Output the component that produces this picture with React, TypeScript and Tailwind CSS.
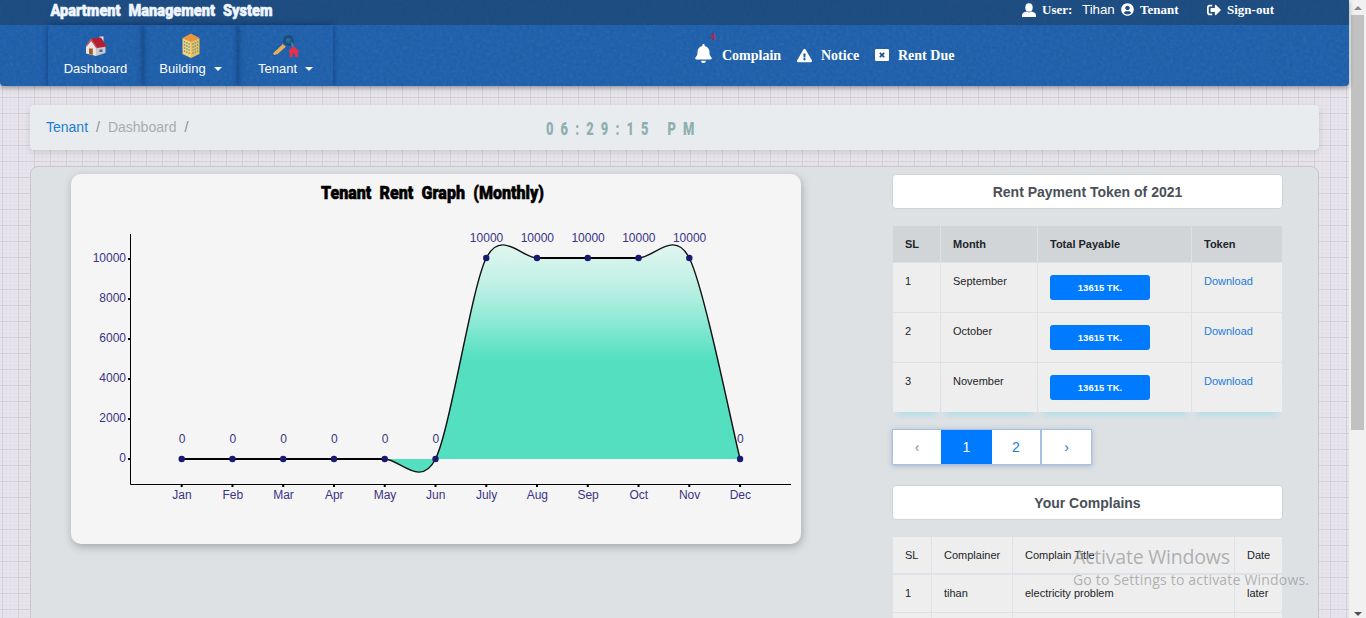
import React from "react";
import { FaBell, FaUserCircle, FaSignOutAlt, FaExclamationTriangle } from "react-icons/fa";

const INK = "#3a3484";
const STEP = 50.76;
const months = ["Jan", "Feb", "Mar", "Apr", "May", "Jun", "July", "Aug", "Sep", "Oct", "Nov", "Dec"];
const rents = [0, 0, 0, 0, 0, 0, 10000, 10000, 10000, 10000, 10000, 0];
const pts = rents.map((v, i) => ({ x: 110.7 + i * STEP, y: 285 - (v / 10000) * 201, v }));

function spline() {
  const t = 0.147;
  let d = `M${pts[0].x} ${pts[0].y}`;
  for (let i = 0; i < pts.length - 1; i++) {
    const a = pts[Math.max(i - 1, 0)];
    const b = pts[i];
    const c = pts[i + 1];
    const e = pts[Math.min(i + 2, pts.length - 1)];
    d += ` C${b.x + (c.x - a.x) * t} ${b.y + (c.y - a.y) * t} ${c.x - (e.x - b.x) * t} ${c.y - (e.y - b.y) * t} ${c.x} ${c.y}`;
  }
  return d;
}

function Chart() {
  const line = spline();
  return (
    <svg width="730" height="370" viewBox="0 0 730 370" className="block" fontFamily="'Liberation Sans', Arial, sans-serif" fontSize="12" fill={INK}>
      <defs>
        <linearGradient id="rent" x1="0" y1="71" x2="0" y2="185" gradientUnits="userSpaceOnUse">
          <stop offset="0" stopColor="#e0f6f0" />
          <stop offset="0.35" stopColor="#bff0e4" />
          <stop offset="0.6" stopColor="#98ebd9" />
          <stop offset="1" stopColor="#54e0c0" />
        </linearGradient>
      </defs>
      <text x="250" y="24.500" textLength="223" lengthAdjust="spacingAndGlyphs" fontFamily="Roboto, sans-serif" fontWeight="900" fontSize="19" fill="#000" stroke="#000" strokeWidth="0.6" wordSpacing="5">
        Tenant Rent Graph (Monthly)
      </text>
      <path d={`${line} Z`} fill="url(#rent)" />
      <path d="M59.5 60V310.5H720" fill="none" stroke="#000" />
      {[0, 2000, 4000, 6000, 8000, 10000].map((v, i) => (
        <g key={v}>
          <rect x="57" y={284 - i * 40} width="3" height="2" fill="#000" />
          <text x="55" y={288 - i * 40} textAnchor="end">{v}</text>
        </g>
      ))}
      <path d={line} fill="none" stroke="#111" strokeWidth="1.4" />
      {[[0, 4], [7, 9]].map(([a, b]) => (
        <path key={a} d={`M${pts[a].x} ${pts[a].y}H${pts[b].x}`} stroke="#000" strokeWidth="2" />
      ))}
      {pts.map((p, i) => (
        <g key={i} textAnchor="middle">
          <circle cx={p.x} cy={p.y} r="3.2" fill="#191970" />
          <text x={p.x + 0.3} y={p.v ? 68 : 269}>{p.v}</text>
          <rect x={p.x - 1} y="310" width="2" height="3" fill="#000" />
          <text x={p.x + 0.3} y="325">{months[i]}</text>
        </g>
      ))}
    </svg>
  );
}

function HouseIcon() {
  return (
    <svg width="24" height="22" viewBox="0 0 24 22">
      <path d="M15.500 1.500h4v6h-4z" fill="#dfe3ee" />
      <path d="M2 11 7 5.500l5 7V21L2 18.500z" fill="#e9e5e2" />
      <path d="M12 11h9.500v7L12 21z" fill="#c9cad0" />
      <path d="M7 3.500 17 2.500l6 9L13 13z" fill="#b51f32" />
      <path d="M7 3.500 1.500 11l1 .7L7.300 6l5.200 7.500 1.200-.5z" fill="#cf5560" />
      <path d="M5 13.500h3.800v6.400L5 19z" fill="#a45c2d" />
      <path d="M15.500 14.500h3v2.500h-3z" fill="#51677e" />
    </svg>
  );
}

function TowerIcon() {
  return (
    <svg width="20" height="26" viewBox="0 0 20 26">
      <path d="m1.500 5 8.500 3.500V25l-8.500-4z" fill="#f2d27c" />
      <path d="M10 8.500 18.500 5v16L10 25z" fill="#e9bf5c" />
      <path d="m10 .5 8.500 4.500L10 9 1.500 5z" fill="#e8963f" />
      <g stroke="#7f9d85" strokeWidth="1.300" strokeDasharray="1.800 1.300">
        <path d="M3.500 8v12M5.800 9v12M8.100 10v12" />
        <path d="M12 10v12M14.300 9v12M16.600 8v12" />
      </g>
    </svg>
  );
}

function KeyIcon() {
  return (
    <svg width="28" height="24" viewBox="0 0 28 24">
      <circle cx="16.500" cy="6.500" r="4.200" fill="#22608c" stroke="#1c4d75" strokeWidth="2.500" />
      <circle cx="16" cy="6" r="1.600" fill="#2c6fae" />
      <path d="m1.500 19.500 9.500-9 2.200 2.200-8 7.300-1.500-.5-1 1.500z" fill="#e9b055" stroke="#e9b055" />
      <path d="M19.500 8.500 21.500 14" stroke="#4f86ae" strokeWidth="1.500" />
      <path d="m21.500 12 6 5.500H26V23h-3v-3.500h-2.500V23h-3v-5.500H16z" fill="#e8304b" />
    </svg>
  );
}

function PersonIcon() {
  return (
    <svg width="14" height="14" viewBox="0 0 14 14" fill="currentColor">
      <ellipse cx="7" cy="4.500" rx="3.700" ry="4.300" />
      <path d="M0 14v-1.800C0 10 2.300 9.300 4.300 8.600c1.700 1.100 3.700 1.100 5.400 0 2 .7 4.300 1.400 4.300 3.600V14z" />
    </svg>
  );
}

function RentDueIcon() {
  return (
    <svg width="14" height="12" viewBox="0 0 14 12">
      <rect width="14" height="12" rx="1.200" fill="#fff" />
      <path d="m4.800 3.800 4.400 4.400m0-4.400L4.800 8.200" stroke="#1f4f8c" strokeWidth="1.700" />
    </svg>
  );
}

function Tab({ icon, label, caret, w }: { icon: React.ReactNode; label: string; caret?: boolean; w: string }) {
  return (
    <div className={`${w} flex h-[61px] flex-col items-center pt-2 shadow-[0_0_6px_rgba(0,20,60,0.45)]`}>
      <div className="flex h-[26px] items-center justify-center">{icon}</div>
      <div className="flex items-center pt-px text-[13px] leading-[18px] text-white">
        {label}
        {caret && <span className="ml-[8px] border-x-4 border-t-4 border-x-transparent border-t-white" />}
      </div>
    </div>
  );
}

function Heading({ children }: { children: React.ReactNode }) {
  return (
    <h2 className="flex h-[35px] items-center justify-center rounded-[4px] border border-[#ced4da] bg-white text-sm font-bold text-[#495057]">
      {children}
    </h2>
  );
}

const cell = "border-r border-[#dee2e6] pl-3";

export default function App() {
  return (
    <div className="relative flex h-[618px] w-[1366px] overflow-hidden font-['Liberation_Sans',Arial,sans-serif]">
      <div className="h-full w-[1349px] bg-[#e7e4eb] bg-[linear-gradient(90deg,#d2cfd9_1px,transparent_1px),linear-gradient(#d4ced9_1px,transparent_1px),linear-gradient(90deg,#e2dfe7_1px,transparent_1px),linear-gradient(#e2dfe7_1px,transparent_1px)] bg-[size:16px_16px,16px_16px,4px_4px,4px_4px] bg-[position:2px_1px]">
        <header className="relative h-[86px] overflow-hidden rounded-b-[4px] bg-[#1a5dab] shadow-[0_2px_5px_rgba(0,0,0,0.35)]">
          <svg className="absolute inset-0 opacity-10" width="1349" height="86">
            <filter id="grain">
              <feTurbulence type="fractalNoise" baseFrequency="0.3" numOctaves="3" seed="4" />
              <feColorMatrix type="saturate" values="0" />
            </filter>
            <rect width="1349" height="86" filter="url(#grain)" />
          </svg>
          <div className="relative flex h-[25px] bg-[#1c3f66]/60 pl-[50px] text-white">
            <svg width="240" height="25" className="shrink-0">
              <text x="0.500" y="15.500" textLength="222" lengthAdjust="spacingAndGlyphs" fontFamily="Roboto, sans-serif" fontWeight="900" fontSize="16.500" fill="#f0f6ff" stroke="#f0f6ff" strokeWidth="0.6" wordSpacing="5">
                Apartment Management System
              </text>
            </svg>
            <div className="ml-[732px] flex h-[19px] items-center font-['Liberation_Serif',serif] text-[13px] font-bold">
              <PersonIcon />
              <span className="ml-[6px] w-[40px]">User:</span>
              <span className="w-[39px] font-['Liberation_Sans',sans-serif] text-[13.3px] font-normal">Tihan</span>
              <FaUserCircle size={13} />
              <span className="ml-[6px] w-[67px]">Tenant</span>
              <FaSignOutAlt size={14} />
              <span className="ml-[6px] whitespace-nowrap">Sign-out</span>
            </div>
          </div>
          <nav className="relative flex pl-[48px]">
            <Tab w="w-[95px]" icon={<HouseIcon />} label="Dashboard" />
            <Tab w="w-[95px]" icon={<TowerIcon />} label="Building" caret />
            <Tab w="w-[95px]" icon={<KeyIcon />} label="Tenant" caret />
            <div className="ml-[361px] flex h-[60px] items-center font-['Liberation_Serif',serif] text-[14px] font-bold text-white">
              <span className="relative mb-[3px]">
                <FaBell size={19} />
                <span className="absolute -top-[13px] left-[16px] text-[11px] leading-[11px] text-[#c2203f]">4</span>
              </span>
              <span className="ml-[9px] w-[75px]">Complain</span>
              <FaExclamationTriangle size={15} />
              <span className="ml-[9px] w-[54px]">Notice</span>
              <RentDueIcon />
              <span className="ml-[9px]">Rent Due</span>
            </div>
          </nav>
        </header>

        <div className="mx-[30px] mt-[19px] flex h-[45px] items-center rounded-[4px] bg-[#e9ecef] pl-4 text-[14px] text-[#868e96] shadow-[0_2px_6px_rgba(0,0,0,0.12)]">
          <span className="text-[#1c7cd6]">Tenant</span>
          <span className="ml-2">/</span>
          <span className="ml-2 text-[#a9abad]">Dashboard</span>
          <span className="ml-2">/</span>
          <svg width="180" height="24" className="ml-[358px]">
            <text x="0" y="19.500" transform="scale(0.72 1)" fontFamily="Roboto, sans-serif" fontWeight="900" fontSize="18" textLength="206" wordSpacing="2" fill="#8db0ae">06:29:15 PM</text>
          </svg>
        </div>

        <main className="mx-[30px] mt-4 flex h-[480px] items-start rounded-t-[8px] border border-[#c6c7cb] bg-[#dde1e4] pt-[7px] pl-10">
          <section className="h-[370px] w-[730px] rounded-[10px] bg-[#f5f5f5] shadow-[1px_3px_8px_rgba(0,0,0,0.25)]">
            <Chart />
          </section>
          <section className="ml-[91px] w-[391px] text-[11px] text-[#212529]">
            <Heading>Rent Payment Token of 2021</Heading>
            <div className="mt-[17px] ml-px w-[389px]">
              <div className="grid h-[37px] grid-cols-[48px_97px_154px_90px] items-stretch border-b border-[#dee2e6] bg-[#d1d5d8] font-bold leading-[37px]">
                <div className={cell}>SL</div>
                <div className={cell}>Month</div>
                <div className={cell}>Total Payable</div>
                <div className="pl-3">Token</div>
              </div>
              {["September", "October", "November"].map((m, i) => (
                <div key={m} className="grid h-[50px] grid-cols-[48px_97px_154px_90px] border-b border-[#dee2e6] bg-[#eeeeee] leading-[16px] *:pt-[10px] last:*:shadow-[0_8px_6px_-5px_#b0dde8]">
                  <div className={cell}>{i + 1}</div>
                  <div className={cell}>{m}</div>
                  <div className={cell}>
                    <button className="mt-[2px] h-[25px] w-[100px] rounded-[3px] bg-[#007bff] text-[9.500px] font-bold text-white">13615 TK.</button>
                  </div>
                  <div className="pl-3 text-[#1c7cd6]">Download</div>
                </div>
              ))}
            </div>
            <div className="mt-4 flex h-[36px] w-[200px] border border-[#a5c1e3] bg-white text-[14px] shadow-[0_1px_5px_rgba(80,110,150,0.4)]">
              <span className="flex w-[48px] items-center justify-center text-[#868e96]">‹</span>
              <span className="flex w-[51px] items-center justify-center bg-[#007bff] text-white">1</span>
              <span className="flex w-[50px] items-center justify-center border-r-2 border-[#a5c1e3] text-[#1c7cd6]">2</span>
              <span className="flex w-[49px] items-center justify-center text-[#1c7cd6]">›</span>
            </div>
            <div className="mt-5">
              <Heading>Your Complains</Heading>
            </div>
            <div className="mt-[17px] ml-px w-[389px] bg-[#eeeeee]">
              {[
                ["SL", "Complainer", "Complain Title", "Date"],
                ["1", "tihan", "electricity problem", "later"],
                ["", "", "", ""],
              ].map((r, i) => (
                <div key={i} className="grid h-[38px] grid-cols-[39px_81px_222px_47px] border-b border-[#dee2e6] leading-[37px] first:border-b-2">
                  <div className={cell}>{r[0]}</div>
                  <div className={cell}>{r[1]}</div>
                  <div className={cell}>{r[2]}</div>
                  <div className="pl-3">{r[3]}</div>
                </div>
              ))}
            </div>
          </section>
        </main>
      </div>

      <aside className="flex h-full w-[17px] flex-col items-center justify-between bg-[#f1f1f1]">
        <div className="flex flex-col items-center">
          <div className="flex h-[15px] items-center">
            <span className="border-x-4 border-b-4 border-x-transparent border-b-[#8a8a8a]" />
          </div>
          <div className="h-[415px] w-[13px] bg-[#c1c1c1]" />
        </div>
        <span className="mb-[2px] border-x-4 border-t-4 border-x-transparent border-t-[#505050]" />
      </aside>

      <div className="absolute top-[545px] left-[1073px] whitespace-nowrap font-['Open_Sans',sans-serif] text-[#909396]/70">
        <svg width="240" height="45" fill="currentColor">
          <text x="0" y="19" fontSize="19.500" textLength="157">Activate Windows</text>
          <text x="0" y="40" fontSize="14" textLength="236">Go to Settings to activate Windows.</text>
        </svg>
      </div>
    </div>
  );
}
